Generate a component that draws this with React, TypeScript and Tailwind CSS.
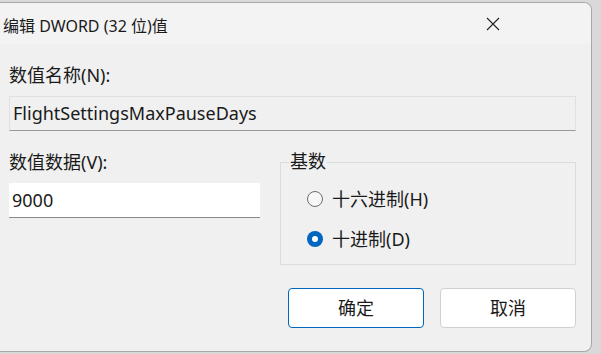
export default function App() {
  const font = { fontFamily: '"Noto Sans", "Noto Sans CJK SC", sans-serif' };
  return (
    <div className="w-[601px] h-[354px] bg-[#d9d9d9] overflow-hidden pt-[2px] pb-[2px]" style={font}>
      <div className="w-[592px] h-[350px] flex flex-col bg-[#f0f0f0] rounded-tr-[8px] rounded-br-[8px] border-r border-b border-t border-[#a8a8a8] overflow-hidden text-[#1a1a1a]">
        <div className="h-[41px] shrink-0 bg-[#f3f3f3] flex items-center justify-between pl-[3px] pr-[90px]">
          <span className="text-[16px] leading-none pt-[4px]">编辑 DWORD (32 位)值</span>
          <svg width="16" height="16" viewBox="0 0 16 16" className="text-[#222]">
            <path d="M2 2L14 14M14 2L2 14" stroke="currentColor" strokeWidth="1.1" />
          </svg>
        </div>
        <div className="flex flex-col pl-[9px] pr-[15px] text-[18px]">
          <div className="leading-none mt-[22px]">数值名称(N):</div>
          <div className="mt-[12px] h-[35px] border border-[#e0e0e0] border-b-[#9a9a9a] flex items-center pl-[3px]">
            FlightSettingsMaxPauseDays
          </div>
          <div className="flex mt-[22px] gap-[20px]">
            <div className="w-[251px] flex flex-col">
              <div className="leading-none">数值数据(V):</div>
              <div className="mt-[12px] h-[35px] bg-white border-b border-[#8a8a8a] flex items-center pl-[3px]">
                9000
              </div>
            </div>
            <div className="flex-1 flex flex-col">
              <div className="relative mt-[9px] h-[103px] border border-[#dcdcdc] flex flex-col pl-[26px] pt-[27px] gap-[22px]">
                <span className="absolute -top-[11px] left-[8px] px-[1px] bg-[#f0f0f0] leading-none">基数</span>
                <div className="flex items-center gap-[9px] h-[18px]">
                  <span className="w-[16px] h-[16px] rounded-full border border-[#6e6e6e] bg-[#f7f7f7]" />
                  <span className="leading-none">十六进制(H)</span>
                </div>
                <div className="flex items-center gap-[9px] h-[18px]">
                  <span className="w-[16px] h-[16px] rounded-full bg-[#0067c0] flex items-center justify-center">
                    <span className="w-[6px] h-[6px] rounded-full bg-white" />
                  </span>
                  <span className="leading-none">十进制(D)</span>
                </div>
              </div>
            </div>
          </div>
          <div className="flex justify-end gap-[16px] mt-[23px]">
            <button className="w-[136px] h-[40px] bg-white border border-[#0067c0] rounded-[4px]">确定</button>
            <button className="w-[136px] h-[40px] bg-white border border-[#d0d0d0] rounded-[4px]">取消</button>
          </div>
        </div>
      </div>
    </div>
  );
}
